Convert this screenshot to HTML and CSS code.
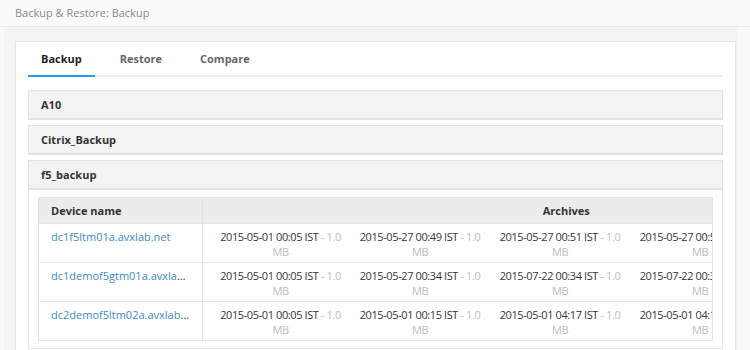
FILE: index.html
```html
<!DOCTYPE html>
<html>
<head>
<meta charset="utf-8">
<link rel="stylesheet" href="styles.css">
</head>
<body>
<div class="topbar">Backup &amp; Restore: Backup</div>
<div class="main">
  <div class="panel">
    <div class="tabs">
      <div class="tab active">Backup</div>
      <div class="tab">Restore</div>
      <div class="tab">Compare</div>
    </div>
    <div class="accordion">
      <div class="acc-item">
        <div class="acc-head">A10</div>
      </div>
      <div class="acc-item">
        <div class="acc-head">Citrix_Backup</div>
      </div>
      <div class="acc-item open">
        <div class="acc-head">f5_backup</div>
        <div class="acc-body">
          <div class="table-wrap">
            <table class="grid">
              <colgroup>
                <col class="c-dev"><col class="c-arc"><col class="c-arc"><col class="c-arc"><col class="c-arc"><col class="c-last">
              </colgroup>
              <thead>
                <tr><th class="th-dev">Device name</th><th class="th-arc" colspan="5">Archives</th></tr>
              </thead>
              <tbody>
                <tr>
                  <td class="dev"><a class="dev-link">dc1f5ltm01a.avxlab.net</a></td>
                  <td class="arc"><div class="arc-in"><span class="date">2015-05-01 00:05 IST</span> <span class="size">- 1.0 MB</span></div></td>
                  <td class="arc"><div class="arc-in"><span class="date">2015-05-27 00:49 IST</span> <span class="size">- 1.0 MB</span></div></td>
                  <td class="arc"><div class="arc-in"><span class="date">2015-05-27 00:51 IST</span> <span class="size">- 1.0 MB</span></div></td>
                  <td class="arc"><div class="arc-in"><span class="date">2015-05-27 00:51 IST</span> <span class="size">- 1.0 MB</span></div></td>
                  <td class="arc"><div class="arc-in"><span class="date">2015-05-27 00:52 IST</span> <span class="size">- 1.0 MB</span></div></td>
                </tr>
                <tr>
                  <td class="dev"><a class="dev-link">dc1demof5gtm01a.avxlab.net</a></td>
                  <td class="arc"><div class="arc-in"><span class="date">2015-05-01 00:05 IST</span> <span class="size">- 1.0 MB</span></div></td>
                  <td class="arc"><div class="arc-in"><span class="date">2015-05-27 00:34 IST</span> <span class="size">- 1.0 MB</span></div></td>
                  <td class="arc"><div class="arc-in"><span class="date">2015-07-22 00:34 IST</span> <span class="size">- 1.0 MB</span></div></td>
                  <td class="arc"><div class="arc-in"><span class="date">2015-07-22 00:34 IST</span> <span class="size">- 1.0 MB</span></div></td>
                  <td class="arc"><div class="arc-in"><span class="date">2015-07-22 00:35 IST</span> <span class="size">- 1.0 MB</span></div></td>
                </tr>
                <tr>
                  <td class="dev"><a class="dev-link">dc2demof5ltm02a.avxlab.net</a></td>
                  <td class="arc"><div class="arc-in"><span class="date">2015-05-01 00:05 IST</span> <span class="size">- 1.0 MB</span></div></td>
                  <td class="arc"><div class="arc-in"><span class="date">2015-05-01 00:15 IST</span> <span class="size">- 1.0 MB</span></div></td>
                  <td class="arc"><div class="arc-in"><span class="date">2015-05-01 04:17 IST</span> <span class="size">- 1.0 MB</span></div></td>
                  <td class="arc"><div class="arc-in"><span class="date">2015-05-01 04:17 IST</span> <span class="size">- 1.0 MB</span></div></td>
                  <td class="arc"><div class="arc-in"><span class="date">2015-05-01 04:18 IST</span> <span class="size">- 1.0 MB</span></div></td>
                </tr>
              </tbody>
            </table>
          </div>
        </div>
      </div>
    </div>
  </div>
</div>
</body>
</html>
```
FILE: styles.css
```css
html, body {
  margin: 0;
  padding: 0;
}
body {
  background: #f9f9f9;
  font-family: "Open Sans", "Liberation Sans", sans-serif;
  font-size: 11px;
  color: #333;
  height: 350px;
  overflow: hidden;
}
.topbar {
  height: 26px;
  line-height: 26px;
  padding-left: 15px;
  background: #fafafa;
  border-bottom: 1px solid #e9e9e9;
  color: #8a8a8a;
  font-size: 11px;
}
.main {
  margin: 0 13px 0 4px;
  padding: 14px 1px 0 11px;
  background: #f4f4f4;
  height: 400px;
}
.panel {
  background: #fff;
  border: 1px solid #e3e3e3;
  padding: 0 12px;
  height: 400px;
}
.tabs {
  display: flex;
  border-bottom: 2px solid #efefef;
}
.tab {
  padding: 9px 13px 8px;
  margin-right: 12px;
  margin-bottom: -2px;
  font-weight: 700;
  font-size: 11px;
  line-height: 16px;
  color: #666;
  border-bottom: 2px solid transparent;
}
.tab.active {
  color: #1f1f1f;
  border-bottom-color: #1c9fee;
}
.accordion {
  margin-top: 13px;
}
.acc-item + .acc-item {
  margin-top: 5px;
}
.acc-head {
  height: 27px;
  line-height: 27px;
  padding: 0 12px;
  background: #f3f3f3;
  border: 1px solid #e4e4e4;
  border-bottom: 2px solid #e2e2e2;
  font-weight: 700;
  font-size: 11px;
  color: #333;
}
.acc-body {
  border: 1px solid #e4e4e4;
  border-top: none;
  padding: 7px 9px 7px 9px;
  background: #fff;
}
.table-wrap {
  border: 1px solid #e2e2e2;
  overflow: hidden;
}
.grid {
  border-collapse: collapse;
  table-layout: fixed;
  width: 891px;
}
.c-dev { width: 163px; }
.c-arc { width: 140px; }
.c-last { width: 168px; }
.grid th {
  background: #ececec;
  height: 25px;
  padding: 0;
  font-weight: 700;
  font-size: 11px;
  color: #333;
}
.th-dev {
  text-align: left;
  padding-left: 12px !important;
  border-right: 1px solid #e0e0e0;
}
.th-arc {
  text-align: center;
}
.grid td {
  border-top: 1px solid #e6e6e6;
  vertical-align: top;
  line-height: 15px;
}
.dev {
  padding: 5px 12px 3px 12px;
  border-right: 1px solid #e3e3e3;
  white-space: nowrap;
  overflow: hidden;
  text-overflow: ellipsis;
}
.dev-link {
  color: #3b8bcc;
  font-size: 11px;
  text-decoration: none;
}
.arc {
  padding: 5px 0 3px 16px;
}
.arc-in {
  width: 124px;
  height: 30px;
  overflow: hidden;
  text-align: center;
  font-size: 11px;
  letter-spacing: -0.4px;
}
.date {
  color: #363636;
}
.size {
  color: #bdbdbd;
}
```
